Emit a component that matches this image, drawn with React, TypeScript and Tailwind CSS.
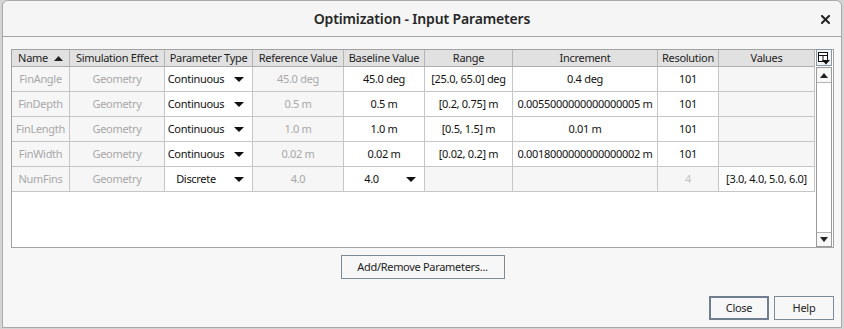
import React from "react";

const cols = [
  "w-[58px]",
  "w-[95px]",
  "w-[88px]",
  "w-[91px]",
  "w-[81px]",
  "w-[88px]",
  "w-[145px]",
  "w-[61px]",
  "w-[96px]",
];

const headers = [
  "Name",
  "Simulation Effect",
  "Parameter Type",
  "Reference Value",
  "Baseline Value",
  "Range",
  "Increment",
  "Resolution",
  "Values",
];

type CellKind = "gray" | "edit" | "dropdown" | "faint";
type Cell = { text: string; kind: CellKind };

const rows: Cell[][] = [
  [
    { text: "FinAngle", kind: "gray" },
    { text: "Geometry", kind: "gray" },
    { text: "Continuous", kind: "dropdown" },
    { text: "45.0 deg", kind: "gray" },
    { text: "45.0 deg", kind: "edit" },
    { text: "[25.0, 65.0] deg", kind: "edit" },
    { text: "0.4 deg", kind: "edit" },
    { text: "101", kind: "edit" },
    { text: "", kind: "gray" },
  ],
  [
    { text: "FinDepth", kind: "gray" },
    { text: "Geometry", kind: "gray" },
    { text: "Continuous", kind: "dropdown" },
    { text: "0.5 m", kind: "gray" },
    { text: "0.5 m", kind: "edit" },
    { text: "[0.2, 0.75] m", kind: "edit" },
    { text: "0.0055000000000000005 m", kind: "edit" },
    { text: "101", kind: "edit" },
    { text: "", kind: "gray" },
  ],
  [
    { text: "FinLength", kind: "gray" },
    { text: "Geometry", kind: "gray" },
    { text: "Continuous", kind: "dropdown" },
    { text: "1.0 m", kind: "gray" },
    { text: "1.0 m", kind: "edit" },
    { text: "[0.5, 1.5] m", kind: "edit" },
    { text: "0.01 m", kind: "edit" },
    { text: "101", kind: "edit" },
    { text: "", kind: "gray" },
  ],
  [
    { text: "FinWidth", kind: "gray" },
    { text: "Geometry", kind: "gray" },
    { text: "Continuous", kind: "dropdown" },
    { text: "0.02 m", kind: "gray" },
    { text: "0.02 m", kind: "edit" },
    { text: "[0.02, 0.2] m", kind: "edit" },
    { text: "0.0018000000000000002 m", kind: "edit" },
    { text: "101", kind: "edit" },
    { text: "", kind: "gray" },
  ],
  [
    { text: "NumFins", kind: "gray" },
    { text: "Geometry", kind: "gray" },
    { text: "Discrete", kind: "dropdown" },
    { text: "4.0", kind: "gray" },
    { text: "4.0", kind: "dropdown" },
    { text: "", kind: "gray" },
    { text: "", kind: "gray" },
    { text: "4", kind: "faint" },
    { text: "[3.0, 4.0, 5.0, 6.0]", kind: "edit" },
  ],
];

function DownTri() {
  return (
    <svg width="10" height="5" viewBox="0 0 10 5">
      <polygon points="0,0 10,0 5,5" fill="#111" />
    </svg>
  );
}

function ColumnIcon() {
  return (
    <svg width="14" height="14" viewBox="0 0 14 14">
      <rect x="1.5" y="1.5" width="9" height="9" fill="#fff" stroke="#111" strokeWidth="1" />
      <line x1="1.5" y1="4.5" x2="10.5" y2="4.5" stroke="#111" strokeWidth="1" />
      <line x1="6" y1="4.5" x2="6" y2="10.5" stroke="#111" strokeWidth="1" />
      <polygon points="5,9 13,9 9,13.5" fill="#111" />
    </svg>
  );
}

function TableCell({ cell, w }: { cell: Cell; w: string }) {
  const base = `${w} h-full shrink-0 border-r border-[#c6c6c6] flex items-center text-[11px] tracking-[-0.3px] whitespace-nowrap overflow-hidden`;
  if (cell.kind === "dropdown") {
    return (
      <div className={`${base} bg-white text-[#111]`}>
        <div className="flex-1 text-center">{cell.text}</div>
        <div className="w-[25px] flex justify-center pr-[1px]">
          <DownTri />
        </div>
      </div>
    );
  }
  if (cell.kind === "edit") {
    return <div className={`${base} justify-center bg-white text-[#111]`}>{cell.text}</div>;
  }
  if (cell.kind === "faint") {
    return <div className={`${base} justify-center bg-[#f6f6f6] text-[#c2c2c2]`}>{cell.text}</div>;
  }
  return <div className={`${base} justify-center bg-[#f6f6f6] text-[#a8a8a8]`}>{cell.text}</div>;
}

export default function App() {
  return (
    <div className="w-[844px] h-[329px] bg-[#d4d4d4] pl-[2px] font-['Noto_Sans',sans-serif] overflow-hidden">
      <div className="w-[840px] h-[328px] bg-[#f7f7f7] border border-[#a9a9a9] rounded-t-[6px] flex flex-col">
        {/* Title bar */}
        <div className="h-[36px] shrink-0 border-b border-[#a4a4a4] bg-[#f5f5f5] rounded-t-[6px] flex items-center relative">
          <div className="flex-1 text-center text-[14px] font-semibold tracking-[-0.15px] text-[#262626]">
            Optimization - Input Parameters
          </div>
          <div className="absolute right-[11px] top-[14px]">
            <svg width="9" height="9" viewBox="0 0 9 9">
              <path d="M1 1 L8 8 M8 1 L1 8" stroke="#222" strokeWidth="2" strokeLinecap="square" />
            </svg>
          </div>
        </div>

        {/* Body */}
        <div className="flex-1 flex flex-col pl-[8px] pr-[7px] pt-[12px]">
          {/* Table */}
          <div className="w-[823px] h-[199px] border border-[#a2a2a2] bg-white flex">
            <div className="flex flex-col w-[803px]">
              <div className="h-[17px] shrink-0 flex bg-[#e1e1e1] border-b border-[#adadad]">
                {headers.map((h, i) => (
                  <div
                    key={h}
                    className={`${cols[i]} h-full shrink-0 border-r border-[#b5b5b5] flex items-center justify-center text-[11px] tracking-[-0.3px] text-[#1e1e1e] whitespace-nowrap`}
                  >
                    {h}
                    {i === 0 && (
                      <svg className="ml-[6px]" width="9" height="5" viewBox="0 0 9 5">
                        <polygon points="0,5 9,5 4.5,0" fill="#222" />
                      </svg>
                    )}
                  </div>
                ))}
              </div>
              {rows.map((r, ri) => (
                <div key={ri} className="h-[25px] shrink-0 flex border-b border-[#c6c6c6]">
                  {r.map((c, ci) => (
                    <TableCell key={ci} cell={c} w={cols[ci]} />
                  ))}
                </div>
              ))}
            </div>
            {/* Scroll column */}
            <div className="w-[18px] flex flex-col px-[1px]">
              <div className="h-[17px] shrink-0 border border-[#8596a6] bg-[#f2f2f2] -mt-[1px] flex items-center justify-center">
                <ColumnIcon />
              </div>
              <div className="flex-1 mt-[1px] border border-[#9a9a9a] bg-[#f3f3f3] flex flex-col">
                <div className="h-[15px] border-b border-[#b3b3b3] flex items-center justify-center bg-[#f7f7f7]">
                  <svg width="8" height="5" viewBox="0 0 8 5">
                    <polygon points="0,5 8,5 4,0" fill="#222" />
                  </svg>
                </div>
                <div className="flex-1 bg-white" />
                <div className="h-[14px] border-t border-[#b3b3b3] flex items-center justify-center bg-[#f7f7f7]">
                  <svg width="8" height="5" viewBox="0 0 8 5">
                    <polygon points="0,0 8,0 4,5" fill="#222" />
                  </svg>
                </div>
              </div>
            </div>
          </div>

          {/* Add/Remove */}
          <div className="flex justify-center mt-[7px]">
            <button className="w-[164px] h-[24px] border border-[#7d8b99] bg-[#f7f7f7] text-[11px] tracking-[-0.3px] text-[#1e1e1e]">
              Add/Remove Parameters...
            </button>
          </div>

          {/* Close / Help */}
          <div className="flex justify-end gap-[5px] mt-[17px]">
            <button className="w-[60px] h-[24px] border-2 border-[#6f7f90] bg-[#f7f7f7] text-[11px] tracking-[-0.3px] text-[#1e1e1e]">
              Close
            </button>
            <button className="w-[60px] h-[24px] border border-[#7d8b99] bg-[#f7f7f7] text-[11px] tracking-[-0.3px] text-[#1e1e1e]">
              Help
            </button>
          </div>
        </div>
      </div>
    </div>
  );
}
